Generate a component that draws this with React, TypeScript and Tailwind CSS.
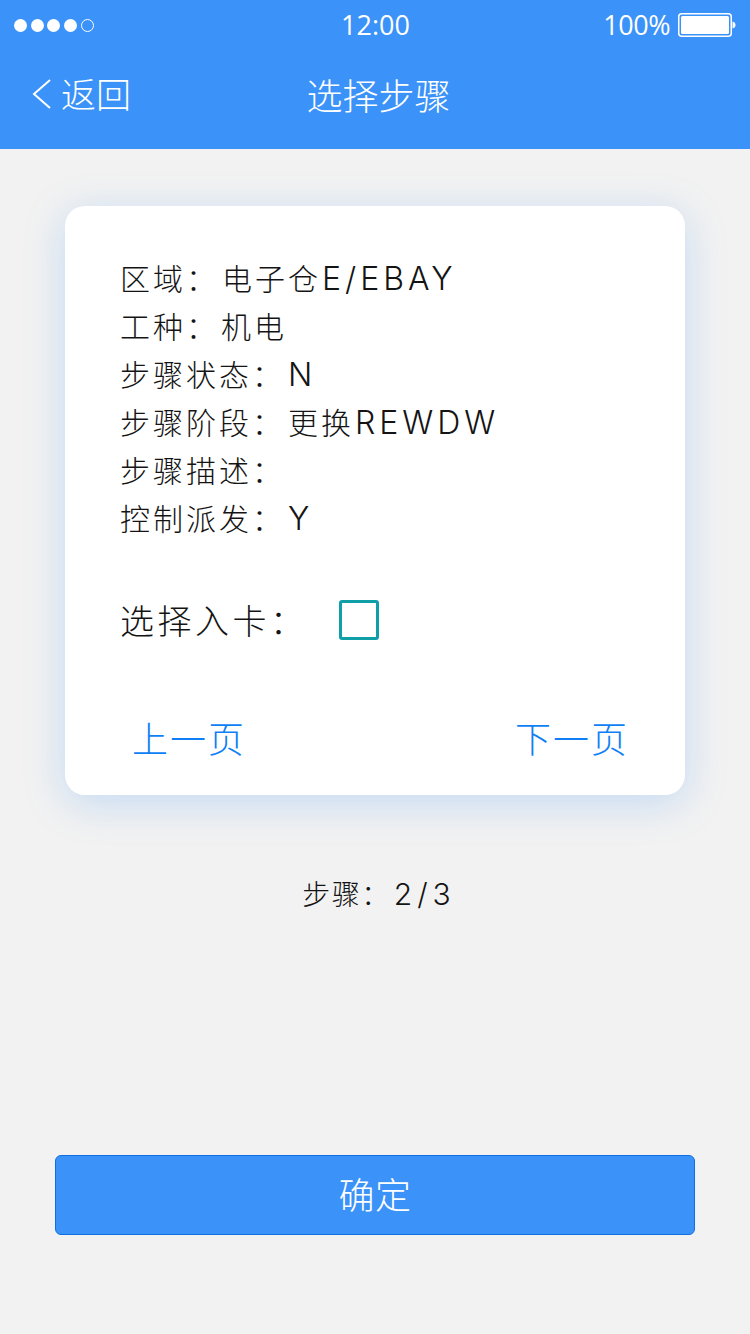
const rows = [
  { label: "区域\uFF1A", cjk: "电子仓", latin: "E/EBAY", gap: "ml-[3px]", latinGap: "ml-[1px]" },
  { label: "工种\uFF1A", cjk: "机电", latin: "", gap: "ml-[2px]", latinGap: "" },
  { label: "步骤状态\uFF1A", cjk: "", latin: "N", gap: "", latinGap: "ml-[3px]" },
  { label: "步骤阶段\uFF1A", cjk: "更换", latin: "REWDW", gap: "ml-[3px]", latinGap: "ml-[1px]" },
  { label: "步骤描述\uFF1A", cjk: "", latin: "", gap: "", latinGap: "" },
  { label: "控制派发\uFF1A", cjk: "", latin: "Y", gap: "", latinGap: "ml-[3px]" },
];

function Battery() {
  return (
    <svg width="58" height="24" viewBox="0 0 58 24" fill="none">
      <rect x="0.750" y="0.750" width="52.500" height="22.500" rx="3" stroke="white" strokeWidth="1.500" />
      <rect x="3" y="3" width="48" height="18" rx="1.500" fill="white" />
      <path d="M54.500 8.500c2 .3 3 1.600 3 3.500s-1 3.200-3 3.500z" fill="white" />
    </svg>
  );
}

export default function App() {
  return (
    <div className="w-[750px] h-[1334px] bg-[#f2f2f2] flex flex-col overflow-hidden font-light [font-family:'Noto_Sans_CJK_SC','Noto_Sans',sans-serif]">
      <div className="h-[149px] bg-[#3b92f8] text-white flex flex-col shrink-0">
        {/* status bar */}
        <div className="h-[50px] pl-[14px] pr-[14px] flex items-center justify-between relative">
          <div className="flex items-center gap-[3.500px]">
            {[0, 1, 2, 3].map((i) => (
              <div key={i} className="w-[13px] h-[13px] rounded-full bg-white" />
            ))}
            <div className="ml-[1px] w-[13px] h-[13px] rounded-full border border-white" />
          </div>
          <div className="absolute left-[341px] top-[7px] text-[27px] leading-[36px] font-normal [font-family:'Open_Sans',sans-serif]">
            12:00
          </div>
          <div className="flex items-center gap-[8px]">
            <span className="text-[27px] leading-[36px] font-normal tracking-[-0.500px] [font-family:'Open_Sans',sans-serif]">100%</span>
            <Battery />
          </div>
        </div>
        {/* nav */}
        <div className="flex-1 relative flex items-center justify-center pb-[11px]">
          <div className="absolute left-[32px] top-[23px] flex items-center gap-[9px]">
            <svg width="20" height="32" viewBox="0 0 20 32" fill="none">
              <path d="M18 2 2 16l16 14" stroke="white" strokeWidth="2" />
            </svg>
            <span className="text-[35px] leading-[40px] mb-[2px]">返回</span>
          </div>
          <span className="text-[36px] leading-[40px] ml-[7px]">选择步骤</span>
        </div>
      </div>

      <div className="flex-1 flex flex-col items-center">
        <div className="mt-[57px] w-[620px] h-[589px] bg-white rounded-[20px] shadow-[0_8px_40px_rgba(59,146,248,0.25)] pt-[47px] pl-[55px] pr-[56px] flex flex-col text-[#141414]">
          <div className="flex flex-col text-[30px] leading-[48px] tracking-[3px]">
            {rows.map((r) => (
              <div key={r.label} className="flex items-baseline h-[48px]">
                <span>{r.label}</span>
                <span className={r.gap}>{r.cjk}</span>
                <span className={`text-[32px] tracking-[4px] [font-family:Inter,sans-serif] ${r.latinGap}`}>{r.latin}</span>
              </div>
            ))}
          </div>
          <div className="mt-[59px] flex items-center h-[40px]">
            <span className="text-[34px] leading-[40px] tracking-[3.500px] w-[219px]">{"选择入卡\uFF1A"}</span>
            <div className="w-[40px] h-[40px] rounded-[3px] border-[3px] border-[#0f9fa8]" />
          </div>
          <div className="mt-[76px] flex justify-between pl-[12px] text-[36px] leading-[42px] tracking-[2px] text-[#0f7ff5]">
            <span>上一页</span>
            <span>下一页</span>
          </div>
        </div>

        <div className="mt-[78px] ml-[8px] flex items-baseline text-[28px] leading-[40px] tracking-[1.500px] text-[#141414]">
          <span>{"步骤\uFF1A"}</span>
          <span className="ml-[3px] text-[30px] tracking-[5px] [font-family:Inter,sans-serif]">2/3</span>
        </div>

        <button className="mt-[241px] w-[640px] h-[80px] pb-[5px] rounded-[6px] bg-[#3b92f8] border border-[#0f6fe0] text-white text-[36px] tracking-[0.500px] flex items-center justify-center">
          确定
        </button>
      </div>
    </div>
  );
}
